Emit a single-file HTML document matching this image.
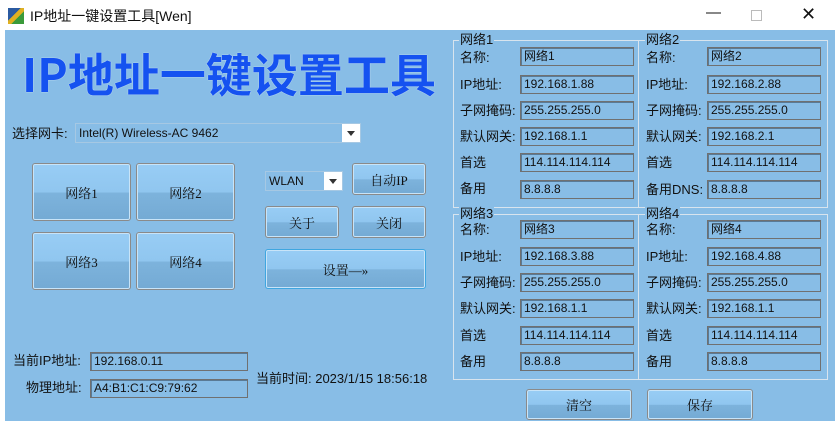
<!DOCTYPE html>
<html><head><meta charset="utf-8"><style>
*{margin:0;padding:0;box-sizing:border-box}
body{width:840px;height:425px;background:#fff;position:relative;overflow:hidden;font-family:"Liberation Sans","Noto Sans CJK SC",sans-serif;font-size:12px;color:#111}
.a{position:absolute}
.main{left:5px;top:30px;width:830px;height:391px;background:#88bde6}
.inp{position:absolute;border:1px solid #707070;background:#88bde6;height:19px;line-height:17px;padding-left:3px;font-size:12px;box-shadow:inset 1px 1px 0 #5a7a95}
.btn{position:absolute;border:1px solid #8a8a8a;border-radius:3px;background:linear-gradient(#98cdf5 0,#90c6ef 50%,#7db3dc 52%,#74aad4 100%);display:flex;align-items:center;justify-content:center;font-family:"Liberation Serif","Noto Serif CJK SC",serif;font-size:13px;box-shadow:inset 0 0 0 1px #c8e4f8}
.grp{position:absolute;border:1px solid #d8e4ee}
.gt{position:absolute;background:#88bde6;padding:0 1px;font-size:13px;line-height:14px}
.lb{position:absolute;font-size:13px;line-height:16px;margin-top:2px}
.combo{position:absolute;border:1px solid #a6c8e3;background:#88bde6;height:20px;line-height:18px;padding-left:3px}
.combo .ar{position:absolute;right:0;top:0;width:18px;height:18px;background:#fff}
.combo .ar:after{content:"";position:absolute;left:5px;top:7px;border:4px solid transparent;border-top:5px solid #333}
</style></head><body>
<div class="a" style="left:8px;top:8px;width:16px;height:16px;background:linear-gradient(135deg,#2b5aa0 0 40%,#e0b020 40% 60%,#3a9a3a 60%)"></div>
<div class="a" style="left:30px;top:7px;font-size:14px;line-height:18px">IP地址一键设置工具[Wen]</div>
<div class="a" style="left:706px;top:4px;font-size:15px">—</div>
<div class="a" style="left:751px;top:10px;width:11px;height:11px;border:1px solid #bbb"></div>
<div class="a" style="left:801px;top:4px;font-size:18px">✕</div>
<div class="a main"></div>
<div class="a" style="left:22px;top:47px;font-size:46px;font-weight:bold;color:#1552f0;letter-spacing:0px;font-family:'Noto Sans CJK SC',sans-serif;line-height:52px;text-shadow:0 0 1px #fff">IP地址一键设置工具</div>
<div class="lb" style="left:12px;top:124px">选择网卡:</div>
<div class="combo" style="left:75px;top:123px;width:286px;font-size:12px">Intel(R) Wireless-AC 9462<div class="ar"></div></div>
<div class="btn" style="left:32px;top:163px;width:99px;height:58px">网络1</div>
<div class="btn" style="left:136px;top:163px;width:99px;height:58px">网络2</div>
<div class="btn" style="left:32px;top:232px;width:99px;height:58px">网络3</div>
<div class="btn" style="left:136px;top:232px;width:99px;height:58px">网络4</div>
<div class="combo" style="left:265px;top:171px;width:78px">WLAN<div class="ar"></div></div>
<div class="btn" style="left:352px;top:163px;width:74px;height:32px">自动IP</div>
<div class="btn" style="left:265px;top:206px;width:74px;height:32px">关于</div>
<div class="btn" style="left:352px;top:206px;width:74px;height:32px">关闭</div>
<div class="btn" style="left:265px;top:249px;width:161px;height:40px;border-color:#3fa6e0">设置—»</div>
<div class="lb" style="left:13px;top:351px">当前IP地址:</div>
<div class="inp" style="left:90px;top:352px;width:158px">192.168.0.11</div>
<div class="lb" style="left:26px;top:378px">物理地址:</div>
<div class="inp" style="left:90px;top:379px;width:158px">A4:B1:C1:C9:79:62</div>
<div class="lb" style="left:256px;top:369px">当前时间: 2023/1/15 18:56:18</div>
<div class="btn" style="left:526px;top:389px;width:106px;height:31px">清空</div>
<div class="btn" style="left:647px;top:389px;width:106px;height:31px">保存</div>

<div class="grp" style="left:453px;top:40px;width:186px;height:168px"></div>
<div class="grp" style="left:638px;top:40px;width:190px;height:168px"></div>
<div class="grp" style="left:453px;top:214px;width:186px;height:166px"></div>
<div class="grp" style="left:638px;top:214px;width:190px;height:166px"></div>
<div class="gt" style="left:459px;top:33px">网络1</div>
<div class="gt" style="left:645px;top:33px">网络2</div>
<div class="gt" style="left:459px;top:207px">网络3</div>
<div class="gt" style="left:645px;top:207px">网络4</div>

<div class="lb" style="left:460px;top:48px">名称:</div><div class="inp" style="left:520px;top:47px;width:114px">网络1</div>
<div class="lb" style="left:460px;top:75px">IP地址:</div><div class="inp" style="left:520px;top:75px;width:114px">192.168.1.88</div>
<div class="lb" style="left:460px;top:101px">子网掩码:</div><div class="inp" style="left:520px;top:101px;width:114px">255.255.255.0</div>
<div class="lb" style="left:460px;top:127px">默认网关:</div><div class="inp" style="left:520px;top:127px;width:114px">192.168.1.1</div>
<div class="lb" style="left:460px;top:153px">首选</div><div class="inp" style="left:520px;top:153px;width:114px">114.114.114.114</div>
<div class="lb" style="left:460px;top:179px">备用</div><div class="inp" style="left:520px;top:180px;width:114px">8.8.8.8</div>

<div class="lb" style="left:646px;top:48px">名称:</div><div class="inp" style="left:707px;top:47px;width:114px">网络2</div>
<div class="lb" style="left:646px;top:75px">IP地址:</div><div class="inp" style="left:707px;top:75px;width:114px">192.168.2.88</div>
<div class="lb" style="left:646px;top:101px">子网掩码:</div><div class="inp" style="left:707px;top:101px;width:114px">255.255.255.0</div>
<div class="lb" style="left:646px;top:127px">默认网关:</div><div class="inp" style="left:707px;top:127px;width:114px">192.168.2.1</div>
<div class="lb" style="left:646px;top:153px">首选</div><div class="inp" style="left:707px;top:153px;width:114px">114.114.114.114</div>
<div class="lb" style="left:646px;top:180px">备用DNS:</div><div class="inp" style="left:707px;top:180px;width:114px">8.8.8.8</div>

<div class="lb" style="left:460px;top:220px">名称:</div><div class="inp" style="left:520px;top:220px;width:114px">网络3</div>
<div class="lb" style="left:460px;top:247px">IP地址:</div><div class="inp" style="left:520px;top:247px;width:114px">192.168.3.88</div>
<div class="lb" style="left:460px;top:273px">子网掩码:</div><div class="inp" style="left:520px;top:273px;width:114px">255.255.255.0</div>
<div class="lb" style="left:460px;top:299px">默认网关:</div><div class="inp" style="left:520px;top:299px;width:114px">192.168.1.1</div>
<div class="lb" style="left:460px;top:326px">首选</div><div class="inp" style="left:520px;top:326px;width:114px">114.114.114.114</div>
<div class="lb" style="left:460px;top:352px">备用</div><div class="inp" style="left:520px;top:352px;width:114px">8.8.8.8</div>

<div class="lb" style="left:646px;top:220px">名称:</div><div class="inp" style="left:707px;top:220px;width:114px">网络4</div>
<div class="lb" style="left:646px;top:247px">IP地址:</div><div class="inp" style="left:707px;top:247px;width:114px">192.168.4.88</div>
<div class="lb" style="left:646px;top:273px">子网掩码:</div><div class="inp" style="left:707px;top:273px;width:114px">255.255.255.0</div>
<div class="lb" style="left:646px;top:299px">默认网关:</div><div class="inp" style="left:707px;top:299px;width:114px">192.168.1.1</div>
<div class="lb" style="left:646px;top:326px">首选</div><div class="inp" style="left:707px;top:326px;width:114px">114.114.114.114</div>
<div class="lb" style="left:646px;top:352px">备用</div><div class="inp" style="left:707px;top:352px;width:114px">8.8.8.8</div>
</body></html>
